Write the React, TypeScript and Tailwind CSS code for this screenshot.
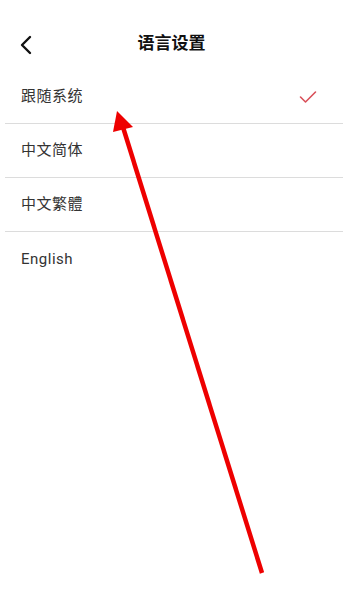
import React from "react";

const languages = [
  { label: "跟随系统", selected: true },
  { label: "中文简体", selected: false },
  { label: "中文繁體", selected: false },
  { label: "English", selected: false },
];

const App = () => {
  return (
    <div
      className="relative w-[343px] h-[593px] bg-white overflow-hidden"
      style={{ fontFamily: '"Roboto", "Noto Sans CJK SC", sans-serif' }}
    >
      {/* Header */}
      <div className="relative flex items-center justify-center h-[88px]">
        <button className="absolute left-[18px] top-[35px] w-[16px] h-[20px] flex items-center justify-center">
          <svg width="14" height="20" viewBox="0 0 14 20" fill="none">
            <path d="M11 2 L3 10 L11 18" stroke="#111" strokeWidth="2.4" strokeLinecap="round" strokeLinejoin="round" />
          </svg>
        </button>
        <h1 className="text-[17px] font-bold text-[#111]">语言设置</h1>
      </div>

      {/* List */}
      <div className="-mt-[18px] ml-[5px]">
        {languages.map((lang, i) => (
          <div
            key={lang.label}
            className={
              "flex items-center justify-between h-[54px] pl-4 pr-[26px] " +
              (i < languages.length - 1 ? "border-b border-[#dcdcdc]" : "")
            }
          >
            <span className="text-[15px] text-[#333] tracking-[0.5px]">{lang.label}</span>
            {lang.selected && (
              <svg width="18" height="14" viewBox="0 0 18 14" fill="none">
                <path d="M1.5 7 L6.5 12 L16.5 2" stroke="#d9515a" strokeWidth="1.6" strokeLinecap="round" strokeLinejoin="round" />
              </svg>
            )}
          </div>
        ))}
      </div>

      {/* Annotation arrow */}
      <svg className="absolute left-0 top-0 pointer-events-none" width="343" height="593" viewBox="0 0 343 593">
        <line x1="262" y1="573" x2="122" y2="124" stroke="#ee0000" strokeWidth="4.5" />
        <polygon points="117,111 113,132 133,127" fill="#ee0000" />
      </svg>
    </div>
  );
};

export default App;
